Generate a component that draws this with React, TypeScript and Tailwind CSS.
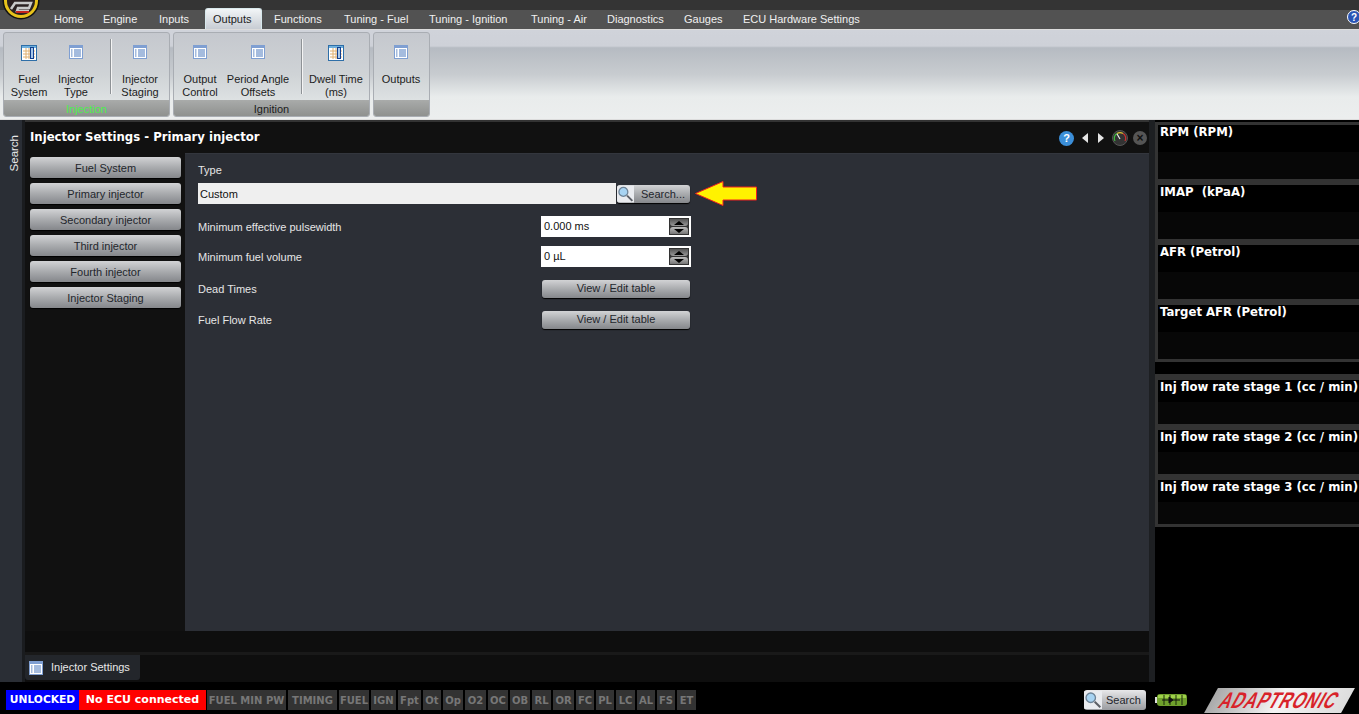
import React from "react";

const FONT_BODY = "font-['Liberation_Sans',sans-serif]";

const TABS = [
  { label: "Home", w: "w-[49px] pl-[8px]" },
  { label: "Engine", w: "w-[56px] pl-[8px]" },
  { label: "Inputs", w: "w-[54px] pl-[8px]" },
  { label: "Outputs", w: "w-[57px] pl-[7px]", active: true },
  { label: "Functions", w: "w-[74px] pl-[12px]" },
  { label: "Tuning - Fuel", w: "w-[85px] pl-[8px]" },
  { label: "Tuning - Ignition", w: "w-[102px] pl-[8px]" },
  { label: "Tuning - Air", w: "w-[76px] pl-[8px]" },
  { label: "Diagnostics", w: "w-[77px] pl-[8px]" },
  { label: "Gauges", w: "w-[59px] pl-[8px]" },
  { label: "ECU Hardware Settings", w: "w-[137px] pl-[8px]" },
];

const MENU = ["Fuel System", "Primary injector", "Secondary injector", "Third injector", "Fourth injector", "Injector Staging"];

const CHIPS = [
  { label: "FUEL MIN PW", w: "w-[79px]" },
  { label: "TIMING", w: "w-[49px]" },
  { label: "FUEL", w: "w-[30px]" },
  { label: "IGN", w: "w-[25px]" },
  { label: "Fpt", w: "w-[23px]" },
  { label: "Ot", w: "w-[18px]" },
  { label: "Op", w: "w-[20px]" },
  { label: "O2", w: "w-[21px]" },
  { label: "OC", w: "w-[20px]" },
  { label: "OB", w: "w-[20px]" },
  { label: "RL", w: "w-[19px]" },
  { label: "OR", w: "w-[21px]" },
  { label: "FC", w: "w-[18px]" },
  { label: "PL", w: "w-[18px]" },
  { label: "LC", w: "w-[19px]" },
  { label: "AL", w: "w-[18px]" },
  { label: "FS", w: "w-[18px]" },
  { label: "ET", w: "w-[19px]" },
];

const BTN =
  "flex items-center justify-center rounded-[3px] bg-gradient-to-b from-[#d2d3d5] via-[#a9abae] to-[#85878b] text-[#23262c] shadow-[0_1px_1px_#000]";

function ListIcon({ className = "" }: { className?: string }) {
  return (
    <svg viewBox="0 0 14 14" className={className}>
      <rect x="0" y="0" width="14" height="14" fill="#7f9fd2" />
      <rect x="1" y="3" width="12" height="10" fill="#fff" />
      <path d="M2 5h1.5M2 7h1.5M2 9h1.5M2 11h1.5M5 5h7M5 7h7M5 9h7M5 11h7" stroke="#4a78bd" strokeWidth="1" />
    </svg>
  );
}

function TableIcon({ className = "" }: { className?: string }) {
  return (
    <svg viewBox="0 0 16 16" className={className}>
      <rect x="0.5" y="0.5" width="15" height="15" fill="#fff" stroke="#2f6fa8" />
      <rect x="1" y="1" width="14" height="2" fill="#6fb0de" />
      <path d="M2 6h12M2 9h12M2 12h12M5 3v11M8 3v11" stroke="#e0b070" strokeWidth="1" />
      <rect x="9.5" y="2.5" width="3" height="11" fill="#a8c8ea" stroke="#123f8f" />
    </svg>
  );
}

function RibbonItem({ label, table, w }: { label: string[]; table?: boolean; w: string }) {
  return (
    <div className={`flex shrink-0 flex-col items-center pt-[12px] text-center text-[11px] leading-[13px] whitespace-nowrap text-[#1c1c1c] ${w}`}>
      {table ? <TableIcon className="h-[16px] w-[16px]" /> : <ListIcon className="h-[14px] w-[14px]" />}
      <div className={table ? "mt-[12px]" : "mt-[14px]"}>
        {label.map((l) => (
          <div key={l}>{l}</div>
        ))}
      </div>
    </div>
  );
}

function RibbonGroup({ title, titleClass = "text-[#1c1c1c]", w, children }: { title?: string; titleClass?: string; w: string; children: React.ReactNode }) {
  return (
    <div className={`flex h-[85px] flex-col overflow-hidden rounded-[3px] border border-[#a9adb3] bg-gradient-to-b from-[#c5c8ce] via-[#cfd3d6] to-[#e6eaea] ${w}`}>
      <div className="flex h-[68px] flex-1">{children}</div>
      <div className={`flex h-[16px] items-center justify-center bg-gradient-to-b from-[#a9abaa] to-[#8f918f] pt-[2px] text-[11px] ${titleClass}`}>{title}</div>
    </div>
  );
}

function RibbonSep() {
  return <div className="mx-[1px] mt-[6px] h-[55px] w-[1px] bg-[#8e9296] shadow-[1px_0_0_#f4f4f4]" />;
}

function MagnifierTile({ className = "" }: { className?: string }) {
  return (
    <svg viewBox="0 0 16 16" className={className}>
      <rect x="0" y="0" width="16" height="16" fill="#e9ebef" />
      <circle cx="6" cy="6" r="4.2" fill="#a7d3f2" stroke="#6d8397" strokeWidth="1.2" />
      <path d="M9.5 9.5l5 5" stroke="#5c5f66" strokeWidth="1.8" />
    </svg>
  );
}

function Spinner() {
  return (
    <div className="flex h-[17px] w-[20px] flex-col items-center justify-center gap-[1px] bg-[#333]">
      <div className="flex h-[7px] w-[18px] items-center justify-center rounded-b-[3px] bg-gradient-to-b from-[#555] to-[#9a9a9a]">
        <div className="h-0 w-0 border-x-[5px] border-b-[4px] border-x-transparent border-b-black" />
      </div>
      <div className="flex h-[7px] w-[18px] items-center justify-center rounded-t-[3px] bg-gradient-to-b from-[#bdbdbd] to-[#777]">
        <div className="h-0 w-0 border-x-[5px] border-t-[4px] border-x-transparent border-t-black" />
      </div>
    </div>
  );
}

function Gauge({ label, h }: { label: string; h: string }) {
  return (
    <div className={`flex flex-col bg-[#000] ${h}`}>
      <div className="h-1/2 pl-[2px] text-[11.7px] leading-[14px] font-bold whitespace-pre text-white">{label}</div>
      <div className="h-1/2 bg-[#070707]" />
    </div>
  );
}

export default function App() {
  return (
    <div className={`relative flex h-[714px] w-[1359px] flex-col overflow-hidden bg-black text-[11px] ${FONT_BODY}`}>
      {/* logo */}
      <svg viewBox="0 0 38 20" className="absolute top-0 left-[2px] z-10 h-[20px] w-[38px]">
        <circle cx="19" cy="1" r="18.5" fill="#111" />
        <circle cx="19" cy="1" r="17" fill="#e7c21b" />
        <circle cx="19" cy="1" r="14" fill="#2a2020" />
        <path d="M9 9L13 3H29L27 8H16L15 11H27" fill="none" stroke="#c9c9c9" strokeWidth="2.5" />
        <path d="M14 12H27" stroke="#c8251c" strokeWidth="2" />
      </svg>

      {/* tabs */}
      <div className="h-[10px] bg-[#343434]" />
      <div className="flex h-[19px] bg-[#525252] pl-[46px]">
        {TABS.map((t) => (
          <div
            key={t.label}
            className={`flex shrink-0 items-center whitespace-nowrap ${t.w} ${
              t.active
                ? "-mt-[2px] h-[21px] rounded-t-[3px] border border-b-0 border-[#d8e8ec] bg-gradient-to-b from-[#f2f5f7] to-[#c7ccd3] text-[#1b1b1b]"
                : "text-[#f0f0f0]"
            }`}
          >
            {t.label}
          </div>
        ))}
        <div className="relative flex-1">
          <div className="absolute top-[0px] right-[-2px] flex h-[14px] w-[14px] items-center justify-center rounded-full border border-white bg-[#2a55b5] text-[10px] font-bold text-white">
            ?
          </div>
        </div>
      </div>

      {/* ribbon */}
      <div className="flex h-[91px] gap-[3px] border-y border-[#dcdcdc] bg-[linear-gradient(180deg,#d0d3da_0%,#ced1d8_18%,#b6bbc2_20%,#c8ccd0_50%,#e9ecec_75%,#eceeee_100%)] pt-[2px] pl-[3px]">
        <RibbonGroup title="Injection" titleClass="text-[#4cf04c]" w="w-[167px]">
          <RibbonItem label={["Fuel", "System"]} table w="w-[50px]" />
          <RibbonItem label={["Injector", "Type"]} w="w-[44px]" />
          <div className="ml-[11px]">
            <RibbonSep />
          </div>
          <RibbonItem label={["Injector", "Staging"]} w="w-[56px]" />
        </RibbonGroup>
        <RibbonGroup title="Ignition" w="w-[197px]">
          <RibbonItem label={["Output", "Control"]} w="w-[52px]" />
          <RibbonItem label={["Period Angle", "Offsets"]} w="w-[64px]" />
          <div className="ml-[10px]">
            <RibbonSep />
          </div>
          <RibbonItem label={["Dwell Time", "(ms)"]} table w="w-[66px]" />
        </RibbonGroup>
        <RibbonGroup w="w-[57px]">
          <RibbonItem label={["Outputs"]} w="w-[54px]" />
        </RibbonGroup>
      </div>

      {/* main */}
      <div className="flex h-[562px] bg-[#262a30]">
        <div className="w-[22px] shrink-0 bg-[#2a2e35]">
          <div className="flex h-[66px] w-[22px] items-center justify-center pl-[7px]">
            <span className="rotate-180 text-[11.5px] text-[#e8e8e8] [writing-mode:vertical-rl]">Search</span>
          </div>
        </div>
        <div className="w-[3px] shrink-0 bg-[#1a1c1f]" />

        <div className="flex w-[1124px] shrink-0 flex-col bg-[#111]">
          <div className="h-[2px] bg-[#333]" />
          <div className="mt-[3px] flex h-[28px] items-center bg-[#111] pr-[2px] pb-[2px] pl-[5px]">
            <div className="flex-1 font-['DejaVu_Sans',sans-serif] text-[11.7px] font-bold text-white">Injector Settings - Primary injector</div>
            <div className="flex items-center">
              <div className="flex h-[15px] w-[15px] items-center justify-center rounded-full bg-[#3b8ed8] text-[11px] font-bold text-white">?</div>
              <div className="ml-[8px] h-0 w-0 border-y-[5px] border-r-[6px] border-y-transparent border-r-[#e4e4e4]" />
              <div className="ml-[10px] h-0 w-0 border-y-[5px] border-l-[6px] border-y-transparent border-l-[#e4e4e4]" />
              <svg viewBox="0 0 16 16" className="ml-[8px] h-[16px] w-[16px]">
                <circle cx="8" cy="8" r="7.5" fill="#333" stroke="#555" />
                <path d="M3 11A5.5 5.5 0 0 1 5 3.5" fill="none" stroke="#3fbf3f" strokeWidth="1.2" />
                <path d="M5 3.5A5.5 5.5 0 0 1 11 3.5" fill="none" stroke="#d8c030" strokeWidth="1.2" />
                <path d="M11 3.5A5.5 5.5 0 0 1 13 11" fill="none" stroke="#d03030" strokeWidth="1.2" />
                <path d="M8 9L5 4" stroke="#eee" strokeWidth="1.2" />
              </svg>
              <div className="ml-[5px] flex h-[14px] w-[14px] items-center justify-center rounded-full bg-[#555] text-[12px] leading-none font-bold text-[#111]">×</div>
            </div>
          </div>

          <div className="flex h-[478px]">
            <div className="flex w-[160px] shrink-0 flex-col gap-[5px] pt-[4px] pl-[5px]">
              {MENU.map((m) => (
                <div key={m} className={`${BTN} h-[21px] w-[151px] pt-[1px]`}>
                  {m}
                </div>
              ))}
            </div>
            <div className="flex w-[964px] flex-col border-t border-[#33363d] bg-[#2c2f36] pl-[13px] text-[#e6e6e6]">
              <div className="mt-[9px] leading-[15px]">Type</div>
              <div className="mt-[5px] flex h-[21px] items-center">
                <div className="flex h-[21px] w-[418px] items-center bg-[#efefef] pt-[1px] pl-[2px] text-[#111]">Custom</div>
                <div className={`${BTN} ml-[1px] h-[18px] w-[73px] justify-start overflow-hidden`}>
                  <MagnifierTile className="h-[18px] w-[17px]" />
                  <span className="ml-[7px] pt-[1px]">Search...</span>
                </div>
                <svg viewBox="0 0 62 25" className="ml-[5px] h-[25px] w-[62px]">
                  <path d="M0.5 12.5L28 0.5V6H61.5V19H28V24.5Z" fill="#fff200" stroke="#f02020" strokeWidth="1" />
                </svg>
              </div>
              <div className="mt-[12px] flex h-[21px] items-center">
                <div className="w-[343px] pt-[1px]">Minimum effective pulsewidth</div>
                <div className="flex h-[21px] w-[150px] items-center justify-between bg-white pr-[2px] pl-[3px] text-[#111]">
                  0.000 ms
                  <Spinner />
                </div>
              </div>
              <div className="mt-[9px] flex h-[21px] items-center">
                <div className="w-[343px] pt-[2px]">Minimum fuel volume</div>
                <div className="flex h-[21px] w-[150px] items-center justify-between bg-white pr-[2px] pl-[3px] text-[#111]">
                  0 µL
                  <Spinner />
                </div>
              </div>
              <div className="mt-[11px] flex h-[21px] items-center">
                <div className="w-[344px] pt-[1px]">Dead Times</div>
                <div className={`${BTN} h-[18px] w-[148px]`}>View / Edit table</div>
              </div>
              <div className="mt-[10px] flex h-[21px] items-center">
                <div className="w-[344px] pt-[1px]">Fuel Flow Rate</div>
                <div className={`${BTN} h-[18px] w-[148px]`}>View / Edit table</div>
              </div>
            </div>
          </div>

          <div className="h-[21px] bg-[#0e0e0e]" />
          <div className="flex h-[30px] items-start border-t-[3px] border-[#191919] bg-[#0e0e0e]">
            <div className="flex h-[25px] w-[115px] items-center gap-[8px] rounded-b-[3px] bg-[#23262b] pl-[4px] text-[#e8e8e8]">
              <ListIcon className="h-[14px] w-[14px]" />
              Injector Settings
            </div>
          </div>
        </div>

        <div className="w-[6px] shrink-0 bg-[#1d1f22]" />
        <div className="flex w-[204px] shrink-0 flex-col overflow-hidden bg-black pt-[2px] font-['DejaVu_Sans',sans-serif]">
          <div className="flex flex-col gap-[6px] border-l-[3px] border-[#333] bg-[#333] pt-[3px] pb-[3px]">
            <Gauge label="RPM (RPM)" h="h-[54px]" />
            <Gauge label="IMAP  (kPaA)" h="h-[54px]" />
            <Gauge label="AFR (Petrol)" h="h-[54px]" />
            <Gauge label="Target AFR (Petrol)" h="h-[54px]" />
          </div>
          <div className="mt-[12px] flex flex-col gap-[6px] border-l-[3px] border-[#333] bg-[#333] pt-[6px] pb-[3px]">
            <Gauge label="Inj flow rate stage 1 (cc / min)" h="h-[44px]" />
            <Gauge label="Inj flow rate stage 2 (cc / min)" h="h-[44px]" />
            <Gauge label="Inj flow rate stage 3 (cc / min)" h="h-[44px]" />
          </div>
        </div>
      </div>

      {/* status bar */}
      <div className="flex h-[32px] items-center bg-black pt-[4px] pl-[6px] font-['DejaVu_Sans',sans-serif]">
        <div className="flex h-[20px] w-[73px] items-center justify-center bg-[#0000ff] text-[10.7px] font-bold text-white">UNLOCKED</div>
        <div className="flex h-[20px] w-[127px] items-center justify-center bg-[#ff0000] text-[11px] font-bold text-white">No ECU connected</div>
        <div className="ml-[1px] flex gap-[2px]">
          {CHIPS.map((c) => (
            <div key={c.label} className={`flex h-[20px] items-center justify-center bg-[#333] text-[10px] font-bold whitespace-nowrap text-[#777] ${c.w}`}>
              {c.label}
            </div>
          ))}
        </div>
        <div className={`ml-[388px] flex h-[20px] w-[62px] items-center overflow-hidden rounded-[3px] bg-gradient-to-b from-[#e8e8ea] to-[#9a9ca0] text-[11px] text-[#23262c] ${FONT_BODY}`}>
          <MagnifierTile className="h-[20px] w-[18px]" />
          <span className="ml-[4px]">Search</span>
        </div>
        <svg viewBox="0 0 32 14" className="ml-[9px] h-[14px] w-[32px]">
          <rect x="2" y="1" width="30" height="12" rx="3" fill="#6fa02c" />
          <rect x="0" y="4" width="2" height="6" fill="#ddd" />
          <rect x="3" y="2" width="28" height="3" fill="#9ed04a" />
          <path d="M9 2v10M15 2v10M21 2v10M27 2v10" stroke="#1b2b08" />
          <path d="M7 7h18M14 4l4 3-4 3z" stroke="#111" fill="#111" />
        </svg>
        <div className="ml-[24px] flex h-[25px] w-[137px] -skew-x-[29deg] items-center justify-center bg-gradient-to-r from-[#aaa] via-[#f4f4f4] to-[#ddd]">
          <span className={`scale-y-[1.4] text-[16px] leading-none font-bold tracking-[1px] text-[#d8232a] ${FONT_BODY}`}>ADAPTRONIC</span>
        </div>
      </div>
    </div>
  );
}
